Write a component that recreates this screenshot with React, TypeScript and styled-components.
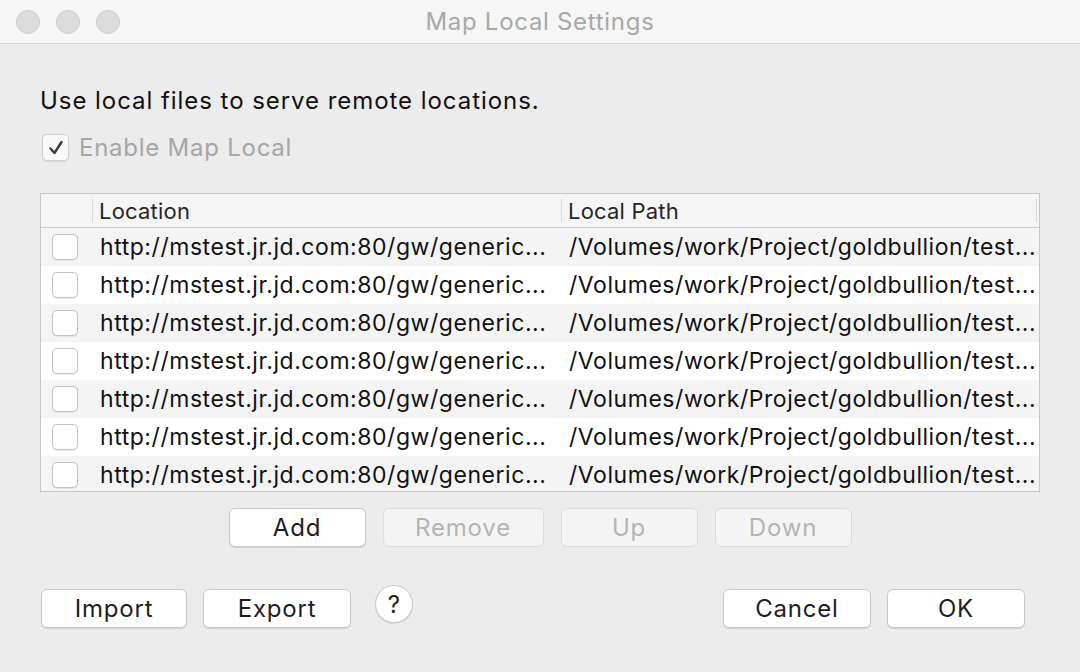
import React from "react";
import styled, { createGlobalStyle } from "styled-components";

const GlobalStyle = createGlobalStyle`
  html, body { margin: 0; padding: 0; background: #ececec; }
  body { font-family: Inter, "Liberation Sans", sans-serif; -webkit-font-smoothing: antialiased; }
  * { box-sizing: border-box; }
`;

const Window = styled.div`
  width: 1080px;
  height: 672px;
  background: #ececec;
  display: flex;
  flex-direction: column;
  overflow: hidden;
`;

const TitleBar = styled.div`
  height: 44px;
  flex: none;
  background: #f6f6f6;
  border-bottom: 1px solid #d2d2d2;
  display: grid;
  grid-template-columns: 1fr auto 1fr;
  align-items: center;
`;

const Lights = styled.div`
  display: flex;
  gap: 16px;
  padding-left: 16px;
`;

const Light = styled.span`
  width: 24px;
  height: 24px;
  border-radius: 50%;
  background: #dcdcdc;
  border: 1px solid #cdcdcd;
`;

const Title = styled.div`
  font-size: 24px;
  letter-spacing: 0.7px;
  color: #a8a8a8;
`;

const Content = styled.div`
  flex: 1;
  display: flex;
  flex-direction: column;
  padding: 44px 40px 0 40px;
`;

const Description = styled.div`
  font-size: 24px;
  letter-spacing: 0.95px;
  line-height: 26px;
  color: #111;
`;

const EnableRow = styled.label`
  display: flex;
  align-items: center;
  gap: 10px;
  margin-top: 20px;
  margin-left: 2px;
  height: 27px;
  font-size: 24px;
  letter-spacing: 0.75px;
  color: #a6a6a6;
`;

const Box = styled.span<{ $disabled?: boolean }>`
  width: ${(p) => (p.$disabled ? 27 : 26)}px;
  height: ${(p) => (p.$disabled ? 27 : 26)}px;
  flex: none;
  border-radius: 5px;
  background: ${(p) => (p.$disabled ? "#f9f9f9" : "#ffffff")};
  border: 1px solid ${(p) => (p.$disabled ? "#cfcfcf" : "#c2c2c2")};
  box-shadow: 0 0.5px 1px rgba(0, 0, 0, 0.08);
  display: flex;
  align-items: center;
  justify-content: center;
`;

const Table = styled.div`
  margin-top: 32px;
  height: 299px;
  border: 1px solid #c6c6c6;
  background: #ffffff;
  overflow: hidden;
  display: flex;
  flex-direction: column;
`;

const HeaderRow = styled.div`
  height: 34px;
  flex: none;
  display: grid;
  grid-template-columns: 51px 469px 1fr;
  background: #f5f5f5;
  border-bottom: 1px solid #cbcbcb;
`;

const HeaderCell = styled.div`
  display: flex;
  align-items: center;
  padding-left: 7px;
  font-size: 22px;
  letter-spacing: 0.2px;
  color: #262626;
  position: relative;
`;

const HeaderSep = styled.span<{ $right?: boolean }>`
  position: absolute;
  top: 5px;
  bottom: 5px;
  width: 1px;
  background: #d8d8d8;
  ${(p) => (p.$right ? "right: 2px;" : "left: 0;")}
`;

const Row = styled.div<{ $odd: boolean }>`
  height: 38px;
  flex: none;
  display: grid;
  grid-template-columns: 51px 469px 1fr;
  align-items: center;
  background: ${(p) => (p.$odd ? "#f4f4f4" : "#ffffff")};
`;

const CheckCell = styled.div`
  display: flex;
  padding-left: 11px;
`;

const Cell = styled.div`
  padding-left: 8px;
  font-size: 23px;
  letter-spacing: 0.55px;
  color: #111;
  white-space: nowrap;
  overflow: hidden;
`;

const ActionRow = styled.div`
  display: flex;
  justify-content: center;
  gap: 17px;
  margin-top: 16px;
  margin-left: -40px;
  margin-right: -40px;
`;

const Button = styled.button<{ $w: number; $disabled?: boolean }>`
  width: ${(p) => p.$w}px;
  height: 39px;
  border-radius: 6px;
  font-family: inherit;
  font-size: 24px;
  letter-spacing: 0.8px;
  padding: 0;
  color: ${(p) => (p.$disabled ? "#b4b4b4" : "#1e1e1e")};
  background: ${(p) => (p.$disabled ? "#f4f4f4" : "#ffffff")};
  border: 1px solid ${(p) => (p.$disabled ? "#dcdcdc" : "#c9c9c9")};
  box-shadow: ${(p) => (p.$disabled ? "none" : "0 1px 1px rgba(0,0,0,0.12)")};
`;

const BottomRow = styled.div`
  display: flex;
  align-items: flex-start;
  margin-top: 42px;
  margin-left: 1px;
  margin-right: 15px;
`;

const Group = styled.div`
  display: flex;
  align-items: flex-start;
  gap: 16px;
`;

const HelpButton = styled.button`
  width: 38px;
  height: 38px;
  margin-left: 8px;
  margin-top: -4px;
  border-radius: 50%;
  background: #ffffff;
  border: 1px solid #c9c9c9;
  box-shadow: 0 1px 1px rgba(0, 0, 0, 0.12);
  font-family: inherit;
  font-size: 24px;
  color: #222;
  padding: 0;
  display: flex;
  align-items: center;
  justify-content: center;
`;

const Spacer = styled.div`
  flex: 1;
`;

const Check = () => (
  <svg width="18" height="18" viewBox="0 0 18 18">
    <path d="M3.5 9.5 L7.5 14 L14.5 3" fill="none" stroke="#3a3a3a" strokeWidth="2.4" strokeLinecap="round" strokeLinejoin="round" />
  </svg>
);

const rows = Array.from({ length: 7 });

export default function App() {
  return (
    <>
      <GlobalStyle />
      <Window>
        <TitleBar>
          <Lights>
            <Light />
            <Light />
            <Light />
          </Lights>
          <Title>Map Local Settings</Title>
          <div />
        </TitleBar>
        <Content>
          <Description>Use local files to serve remote locations.</Description>
          <EnableRow>
            <Box $disabled>
              <Check />
            </Box>
            Enable Map Local
          </EnableRow>
          <Table>
            <HeaderRow>
              <HeaderCell />
              <HeaderCell>
                <HeaderSep />
                Location
              </HeaderCell>
              <HeaderCell>
                <HeaderSep />
                Local Path
                <HeaderSep $right />
              </HeaderCell>
            </HeaderRow>
            {rows.map((_, i) => (
              <Row key={i} $odd={i % 2 === 0}>
                <CheckCell>
                  <Box />
                </CheckCell>
                <Cell>http://mstest.jr.jd.com:80/gw/generic...</Cell>
                <Cell>/Volumes/work/Project/goldbullion/test...</Cell>
              </Row>
            ))}
          </Table>
          <ActionRow>
            <Button $w={137}>Add</Button>
            <Button $w={161} $disabled>Remove</Button>
            <Button $w={137} $disabled>Up</Button>
            <Button $w={137} $disabled>Down</Button>
          </ActionRow>
          <BottomRow>
            <Group>
              <Button $w={146}>Import</Button>
              <Button $w={148}>Export</Button>
              <HelpButton>?</HelpButton>
            </Group>
            <Spacer />
            <Group>
              <Button $w={148}>Cancel</Button>
              <Button $w={138}>OK</Button>
            </Group>
          </BottomRow>
        </Content>
      </Window>
    </>
  );
}
